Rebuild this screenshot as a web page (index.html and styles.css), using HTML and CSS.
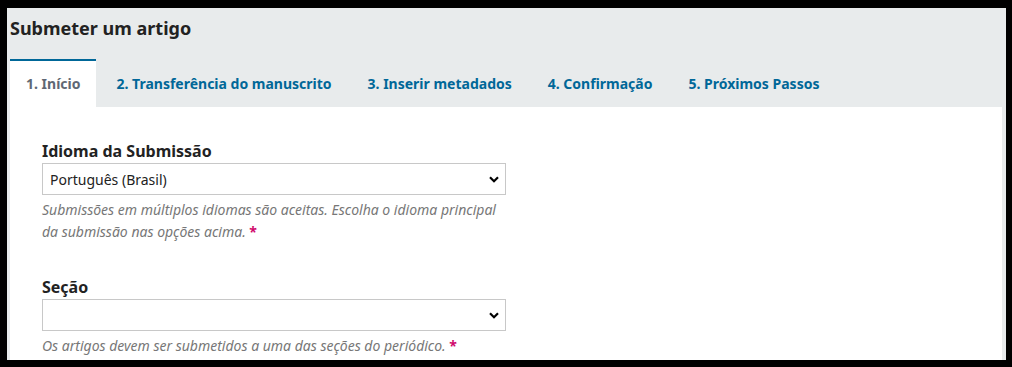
FILE: index.html
```html
<!DOCTYPE html>
<html lang="pt-BR">
<head>
    <meta charset="UTF-8">
    <title>Submeter um artigo</title>
    <link rel="stylesheet" href="styles.css">
</head>
<body>
    <div class="page">
        <h1 class="title">Submeter um artigo</h1>

        <ul class="tabs">
            <li class="tab active">1. Início</li>
            <li class="tab">2. Transferência do manuscrito</li>
            <li class="tab">3. Inserir metadados</li>
            <li class="tab">4. Confirmação</li>
            <li class="tab">5. Próximos Passos</li>
        </ul>

        <div class="panel">
            <div class="field">
                <label class="label" for="locale">Idioma da Submissão</label>
                <select id="locale" class="select">
                    <option>Português (Brasil)</option>
                </select>
                <p class="help">Submissões em múltiplos idiomas são aceitas. Escolha o idioma principal da submissão nas opções acima. <span class="req">*</span></p>
            </div>

            <div class="field">
                <label class="label" for="section">Seção</label>
                <select id="section" class="select">
                    <option></option>
                </select>
                <p class="help">Os artigos devem ser submetidos a uma das seções do periódico. <span class="req">*</span></p>
            </div>
        </div>
    </div>
</body>
</html>
```

FILE: styles.css
```css
body {
    margin: 0;
    padding: 8px 6px 0 7px;
    background: #000;
    font-family: "Noto Sans", "Open Sans", sans-serif;
    height: 367px;
    box-sizing: border-box;
    overflow: hidden;
}

.page {
    background: #e8ebec;
    height: 352px;
    padding: 0 4px 0 3px;
    overflow: hidden;
}

.title {
    margin: 0;
    padding-top: 8px;
    font-size: 18px;
    line-height: 24px;
    font-weight: 700;
    color: #222;
}

.tabs {
    display: flex;
    gap: 4px;
    list-style: none;
    margin: 19px 0 0;
    padding: 0;
}

.tab {
    padding: 0 16px;
    height: 48px;
    line-height: 46px;
    font-size: 14px;
    font-weight: 700;
    color: #006798;
    border-top: 2px solid transparent;
    box-sizing: border-box;
}

.tab.active {
    background: #fff;
    border-top-color: #006798;
    color: #5f6874;
}

.panel {
    background: #fff;
    padding: 32px 32px 0;
    height: 260px;
}

.field {
    width: 464px;
    margin-bottom: 32px;
}

.label {
    display: block;
    font-size: 16px;
    font-weight: 700;
    line-height: 24px;
    color: #222;
}

.select {
    display: block;
    width: 464px;
    height: 32px;
    margin: 0;
    padding: 0 28px 0 7px;
    border: 1px solid #c8c8c8;
    border-radius: 0;
    background: #fff url("data:image/svg+xml,%3Csvg xmlns='http://www.w3.org/2000/svg' width='10' height='7' viewBox='0 0 10 7'%3E%3Cpath d='M1 1.2l4 4 4-4' fill='none' stroke='%23000' stroke-width='2.2'/%3E%3C/svg%3E") no-repeat right 6px center;
    appearance: none;
    font-family: inherit;
    font-size: 14px;
    color: #222;
}

.help {
    margin: 4px 0 0;
    font-size: 14px;
    font-style: italic;
    line-height: 22px;
    color: #777;
}

.req {
    color: #d00a6c;
    font-style: normal;
    font-weight: 700;
}
```
